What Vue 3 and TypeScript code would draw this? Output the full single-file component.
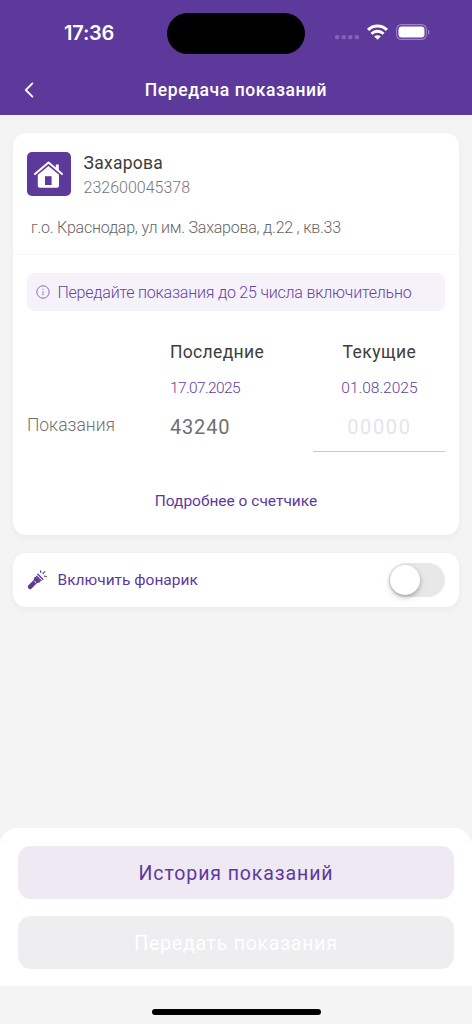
<script setup lang="ts">
import { ref } from 'vue'

interface Account {
  name: string
  number: string
  address: string
}

const account: Account = {
  name: 'Захарова',
  number: '232600045378',
  address: 'г.о. Краснодар, ул им. Захарова, д.22 , кв.33',
}
const torchOn = ref(false)
const reading = ref('')
</script>

<template>
  <div class="screen">
    <header class="top">
      <div class="status">
        <span class="time">17:36</span>
        <div class="island"></div>
        <div class="signals">
          <svg class="dots" width="26" height="6" viewBox="0 0 26 6" fill="#8163b3">
            <rect x="1" y="0" width="4.2" height="4.2" rx="1.5" />
            <rect x="7.6" y="0" width="4.2" height="4.2" rx="1.5" />
            <rect x="14.2" y="0" width="4.2" height="4.2" rx="1.5" />
            <rect x="20.8" y="0" width="4.2" height="4.2" rx="1.5" />
          </svg>
          <svg class="wifi" width="21" height="16" viewBox="0 0 21 16" fill="none" stroke="#fff">
            <path d="M1 5.9C6.4.7 14.6.7 20 5.9" stroke-width="3" />
            <path d="M4.4 9.7c3.6-3.3 8.6-3.3 12.2 0" stroke-width="2.8" />
            <path d="M7.2 12.4c2-1.7 4.6-1.7 6.6 0L10.5 15.7Z" fill="#fff" stroke="none" />
          </svg>
          <svg class="battery" width="35" height="17" viewBox="0 0 35 17">
            <rect x=".6" y=".6" width="29.8" height="14.8" rx="4.8" fill="none" stroke="#9a82c2" stroke-width="1.1" />
            <rect x="2.5" y="2.5" width="26" height="11" rx="3.2" fill="#fff" />
            <path d="M32 5.4c2 .8 2 4.4 0 5.2Z" fill="#9a82c2" />
          </svg>
        </div>
      </div>
      <div class="nav">
        <svg class="back" width="10" height="16" viewBox="0 0 10 16" fill="none" stroke="#fff" stroke-width="1.8" stroke-linecap="round" stroke-linejoin="round">
          <path d="M8.4 1.4 1.8 8l6.6 6.6" />
        </svg>
        <h1 class="title"><span>Передача показаний</span></h1>
      </div>
    </header>

    <main class="content">
      <section class="card">
        <div class="account">
          <svg class="house" width="44" height="44" viewBox="0 0 44 44">
            <rect width="44" height="44" rx="5" fill="#5e399c" />
            <path d="M8 22 21.5 10.6 35 22" fill="none" stroke="#fff" stroke-width="2" stroke-linecap="round" stroke-linejoin="round" />
            <path d="M28.8 12.5h3v7l-3-2.6Z" fill="#fff" />
            <path d="M10.8 22.8 21.5 13.9l10.5 8.9v10.9a2 2 0 0 1-2 2H12.8a2 2 0 0 1-2-2Z" fill="#fff" />
            <path d="M18 24.2h6.6V33H18Z" fill="#5e399c" />
          </svg>
          <div class="owner">
            <span class="name">{{ account.name }}</span>
            <span class="number">{{ account.number }}</span>
          </div>
        </div>
        <p class="address"><span>{{ account.address }}</span></p>

        <div class="notice">
          <svg class="info" width="14" height="14" viewBox="0 0 14 14" fill="none" stroke="#8a6bbd">
            <circle cx="7" cy="7" r="6.2" stroke-width="1" />
            <path d="M7 6.3v3.9M7 3.8v1.1" stroke-width=".9" />
          </svg>
          <span class="notice-text">Передайте показания до 25 числа включительно</span>
        </div>

        <div class="readings">
          <div class="label"><span>Показания</span></div>
          <div class="column">
            <span class="heading last">Последние</span>
            <span class="date first-date">17.07.2025</span>
            <span class="value">43240</span>
          </div>
          <div class="column current">
            <span class="heading now">Текущие</span>
            <span class="date">01.08.2025</span>
            <input v-model="reading" class="entry" placeholder="00000" inputmode="numeric" />
          </div>
        </div>

        <div class="details"><span>Подробнее о счетчике</span></div>
      </section>

      <section class="card torch">
        <svg class="flashlight" width="20" height="20" viewBox="0 0 20 20" fill="#5e399c">
          <path d="M9.2 6.8 13.4 11l-.5 1.3-3.1.9-5.4 5.5a1.7 1.7 0 0 1-2.4 0l-.8-.8a1.7 1.7 0 0 1 0-2.4l5.5-5.4.9-3.1Z" />
          <path d="m9.3 6 5 5" stroke="#5e399c" stroke-width="1.4" />
          <path d="m10.8 4.3 5 5" stroke="#5e399c" stroke-width="1.4" stroke-linecap="round" />
          <path d="M13.8 2.5 13.5.8M15.9 3.7l2-2M17.5 6.2l1.8.3" stroke="#5e399c" stroke-width="1.2" stroke-linecap="round" />
          <path d="m7.9 11.7.5.5" stroke="#fff" stroke-width="1.1" stroke-linecap="round" />
        </svg>
        <span class="torch-label">Включить фонарик</span>
        <button class="switch" :class="{ on: torchOn }" @click="torchOn = !torchOn"><i class="knob"></i></button>
      </section>
    </main>

    <footer class="actions">
      <button class="button history"><span>История показаний</span></button>
      <button class="button send" disabled><span>Передать показания</span></button>
    </footer>
    <div class="home"><i></i></div>
  </div>
</template>

<style>
html, body { margin: 0; background: #f4f4f4; }
</style>

<style scoped>
* { box-sizing: border-box; }
.screen {
  width: 472px;
  height: 1024px;
  display: flex;
  flex-direction: column;
  overflow: hidden;
  background: #f4f4f4;
  color: #3d3d3d;
  font-family: Roboto, "Noto Sans", sans-serif;
}
span { white-space: nowrap; }
button { border: 0; padding: 0; font: inherit; }
.top { height: 115.4px; flex: none; background: #5e399c; color: #fff; }
.status { height: 65px; display: flex; align-items: center; }
.time {
  width: 103px;
  margin-left: 64px;
  font: 600 20px/24px Inter, sans-serif;
  letter-spacing: -.2px;
}
.island { width: 138px; height: 41px; margin-top: 1px; border-radius: 21px; background: #000; }
.signals { display: flex; align-items: center; margin-left: 29px; }
.dots { margin-top: 10px; }
.wifi { margin: -1px 0 0 7px; }
.battery { margin-left: 8px; }
.nav { height: 50px; display: flex; align-items: center; padding-right: 34px; }
.back { margin-left: 24px; }
.title { flex: 1; margin: 0; text-align: center; font-size: 17.5px; line-height: 22px; font-weight: 500; }
.title span { letter-spacing: .57px; }
.content { padding: 17.9px 13.4px 0; flex: 1; }
.card { background: #fff; border-radius: 13px; box-shadow: 0 2px 7px rgba(0, 0, 0, .045); }
.content > .card:first-child { height: 401.5px; }
.account { display: flex; padding: 18.7px 13.2px 0; }
.owner { display: flex; flex-direction: column; margin-left: 13px; }
.name { font-size: 17.5px; line-height: 22px; letter-spacing: .25px; }
.number { margin-top: 4.5px; font-size: 16px; line-height: 20px; font-weight: 300; color: #777; }
.address {
  height: 57px;
  margin: 0;
  padding: 19.4px 0 0 17.5px;
  border-bottom: 1px solid #f5f5f5;
  font-size: 16px;
  line-height: 20px;
  font-weight: 300;
  letter-spacing: -.22px;
  color: #666;
}
.notice {
  height: 38px;
  display: flex;
  align-items: center;
  margin: 18px 13.5px 0;
  padding-left: 9px;
  border-radius: 8px;
  background: #f5f2f9;
  color: #6842a6;
}
.notice-text { margin: 1px 0 0 7.5px; font-size: 16px; line-height: 20px; font-weight: 300; letter-spacing: -.21px; }
.readings { display: grid; grid-template-columns: 143px 143.5px 132px; margin: 30px 13.5px 0; }
.label { padding-top: 72.5px; font-size: 17.5px; line-height: 22px; font-weight: 300; color: #707070; }
.column { display: flex; flex-direction: column; align-items: flex-start; }
.current { align-items: center; }
.heading { font-size: 17.5px; line-height: 22px; }
.last { letter-spacing: .35px; }
.now { letter-spacing: .5px; }
.date { margin-top: 14.3px; font-size: 15.5px; line-height: 20px; font-weight: 300; color: #6340a2; }
.first-date { letter-spacing: -.6px; }
.value { margin-top: 16.8px; font-size: 20px; line-height: 24px; letter-spacing: .85px; color: #707070; }
.entry {
  width: 132px;
  height: 54.6px;
  padding: 5px 0 0;
  border: 0;
  border-bottom: 1px solid #cfc4df;
  outline: 0;
  background: transparent;
  font: 400 20px/24px Roboto, sans-serif;
  letter-spacing: 1.6px;
  text-align: center;
}
.entry::placeholder { color: #e5e4ec; opacity: 1; }
.details { margin-top: 38.4px; text-align: center; font-size: 15.5px; line-height: 20px; color: #5e399c; }
.torch { height: 54px; display: flex; align-items: center; margin-top: 18px; padding: 0 13.4px 0 13.8px; }
.torch-label { margin: 1px 0 0 10.4px; font-size: 15.5px; line-height: 20px; color: #5e399c; }
.switch { width: 56px; height: 34px; padding: 2px 1px; margin-left: auto; border-radius: 17px; background: #e8e8e8; }
.switch.on { background: #5e399c; }
.knob { display: block; width: 30px; height: 30px; border-radius: 50%; background: #fff; box-shadow: 0 2px 4px rgba(0, 0, 0, .25), 0 3px 10px rgba(0, 0, 0, .08); }
.switch.on .knob { margin-left: auto; }
.actions { height: 158px; flex: none; padding: 18px 18px 0; border-radius: 18px 18px 0 0; background: #fff; }
.button { display: block; width: 100%; height: 52.5px; padding-top: 3px; border-radius: 13px; font-size: 19.5px; line-height: 24px; }
.history { background: #efe9f3; color: #5e399c; letter-spacing: .9px; }
.send { margin-top: 17.5px; background: #eeeef0; color: #fff; letter-spacing: .75px; }
.home { height: 38px; flex: none; display: flex; justify-content: center; padding-top: 23px; }
.home i { width: 169px; height: 6px; border-radius: 3px; background: #000; }
</style>
